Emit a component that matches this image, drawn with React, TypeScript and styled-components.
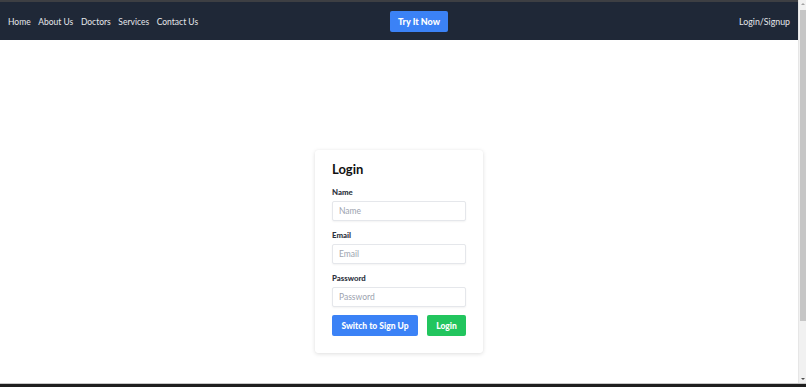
import React from "react";
import styled, { createGlobalStyle } from "styled-components";

const Global = createGlobalStyle`
  html, body { margin: 0; padding: 0; height: 100%; overflow: hidden; }
  body { font-family: Lato, "Open Sans", sans-serif; background: #ffffff; }
  #root { height: 100%; }
`;

const Frame = styled.div`
  width: 806px;
  height: 387px;
  display: flex;
  flex-direction: column;
`;

const Window = styled.div`
  flex: 1;
  display: flex;
  min-height: 0;
`;

const Page = styled.div`
  flex: 1;
  display: flex;
  flex-direction: column;
  min-width: 0;
`;

const TopEdge = styled.div`
  height: 2px;
  background: #3d3f43;
`;

const Nav = styled.nav`
  height: 38px;
  background: #1f2837;
  display: flex;
  align-items: center;
  padding: 1px 8px 0;
  box-sizing: border-box;
  color: #f3f4f6;
`;

const Links = styled.div`
  display: flex;
  gap: 7.6px;
  flex: 1;
`;

const NavLink = styled.a`
  font-size: 8.5px;
  color: #e5e7eb;
  text-decoration: none;
`;

const TryButton = styled.button`
  margin-left: 40px;
  margin-top: -1px;
  background: #3b82f6;
  color: #fff;
  border: none;
  border-radius: 2px;
  height: 21px;
  width: 58px;
  padding: 0;
  font-family: Lato, sans-serif;
  font-weight: 900;
  font-size: 9px;
`;

const Right = styled.div`
  flex: 1;
  display: flex;
  justify-content: flex-end;
  font-size: 8.8px;
  color: #e5e7eb;
`;

const Content = styled.main`
  flex: 1;
  display: flex;
  justify-content: center;
  align-items: flex-start;
  padding-top: 110px;
`;

const Card = styled.div`
  width: 168px;
  box-sizing: border-box;
  padding: 11px 17px 17px;
  background: #fff;
  border-radius: 3px;
  box-shadow: 0 1px 4px rgba(0, 0, 0, 0.13), 0 0 1px rgba(0,0,0,0.06);
`;

const Title = styled.h2`
  margin: 0 0 10px;
  font-size: 13px;
  font-weight: 700;
  color: #111;
`;

const Field = styled.div`
  display: flex;
  flex-direction: column;
  margin-bottom: 9px;
`;

const Label = styled.label`
  font-size: 7.8px;
  font-weight: 900;
  color: #2d3340;
  margin-bottom: 4px;
`;

const Input = styled.input`
  height: 20px;
  box-sizing: border-box;
  border: 1px solid #e5e7eb;
  border-radius: 2px;
  padding: 0 6px;
  font-family: Lato, sans-serif;
  font-size: 8.5px;
  box-shadow: 0 1px 2px rgba(0,0,0,0.05);
  outline: none;
  &::placeholder { color: #9ca3af; }
`;

const Actions = styled.div`
  display: flex;
  justify-content: space-between;
  margin-top: -1px;
`;

const ActionButton = styled.button<{ $color: string; $w: number }>`
  background: ${(p) => p.$color};
  width: ${(p) => p.$w}px;
  height: 21px;
  border: none;
  border-radius: 2px;
  color: #fff;
  font-family: Lato, sans-serif;
  font-weight: 900;
  font-size: 8.5px;
  padding: 0;
`;

const Scrollbar = styled.div`
  width: 8px;
  background: #f1f1f1;
  display: flex;
  flex-direction: column;
  align-items: center;
  justify-content: space-between;
  border-left: 1px solid #e6e6e6;
  box-sizing: border-box;
`;

const Arrow = styled.div<{ $up?: boolean }>`
  width: 0;
  height: 0;
  margin: 3px 0;
  border-left: 2px solid transparent;
  border-right: 2px solid transparent;
  ${(p) => (p.$up ? "border-bottom: 2px solid #a3a3a3;" : "border-top: 2px solid #505050;")}
`;

const Thumb = styled.div`
  flex: 1;
  width: 6px;
  margin: 2px 0 54px;
  background: #c6c6c6;
`;

const BottomEdge = styled.div`
  height: 4px;
  border-top: 1px solid #c8c8c8;
  background: #1f1f1f;
  box-sizing: border-box;
`;

export default function App() {
  return (
    <>
      <Global />
      <Frame>
        <Window>
          <Page>
            <TopEdge />
            <Nav>
              <Links>
                <NavLink>Home</NavLink>
                <NavLink>About Us</NavLink>
                <NavLink>Doctors</NavLink>
                <NavLink>Services</NavLink>
                <NavLink>Contact Us</NavLink>
              </Links>
              <TryButton>Try It Now</TryButton>
              <Right>Login/Signup</Right>
            </Nav>
            <Content>
              <Card>
                <Title>Login</Title>
                <Field>
                  <Label>Name</Label>
                  <Input placeholder="Name" />
                </Field>
                <Field>
                  <Label>Email</Label>
                  <Input placeholder="Email" />
                </Field>
                <Field>
                  <Label>Password</Label>
                  <Input placeholder="Password" type="password" />
                </Field>
                <Actions>
                  <ActionButton $color="#3b82f6" $w={86}>Switch to Sign Up</ActionButton>
                  <ActionButton $color="#22c55e" $w={39}>Login</ActionButton>
                </Actions>
              </Card>
            </Content>
          </Page>
          <Scrollbar>
            <Arrow $up />
            <Thumb />
            <Arrow />
          </Scrollbar>
        </Window>
        <BottomEdge />
      </Frame>
    </>
  );
}
